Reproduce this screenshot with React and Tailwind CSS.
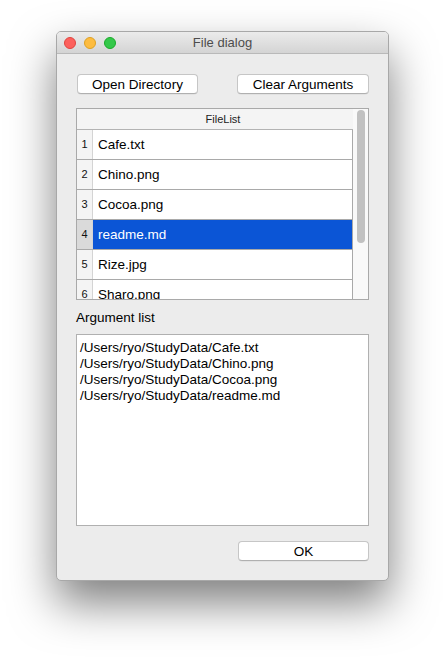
import React from "react";

const files = ["Cafe.txt", "Chino.png", "Cocoa.png", "readme.md", "Rize.jpg", "Sharo.png"];
const args = [
  "/Users/ryo/StudyData/Cafe.txt",
  "/Users/ryo/StudyData/Chino.png",
  "/Users/ryo/StudyData/Cocoa.png",
  "/Users/ryo/StudyData/readme.md",
];

function MacButton({ children, className }) {
  return (
    <div
      className={
        "h-[20px] pt-[1px] flex items-center justify-center bg-white rounded-[4px] border border-[#c6c6c6] border-b-[#b0b0b0] text-[13.5px] text-black leading-none shadow-[0_0.5px_0.5px_rgba(0,0,0,0.08)] " +
        className
      }
    >
      {children}
    </div>
  );
}

export default function App() {
  return (
    <div
      className="w-[445px] h-[660px] bg-white pt-[31px] pl-[56px] overflow-hidden"
      style={{ fontFamily: '"Liberation Sans", Arial, sans-serif' }}
    >
      <div className="w-[333px] h-[550px] bg-[#ececec] rounded-[5px] border border-[#a8a8a8] shadow-[0_22px_45px_rgba(0,0,0,0.5)] flex flex-col overflow-hidden">
        {/* Title bar */}
        <div className="h-[22px] shrink-0 bg-gradient-to-b from-[#ebebeb] to-[#d4d4d4] border-b border-[#b9b9b9] flex items-center relative">
          <div className="flex items-center gap-[8px] pl-[7px]">
            <div className="w-[12px] h-[12px] rounded-full bg-[#fc605c] border border-[#e0443e]" />
            <div className="w-[12px] h-[12px] rounded-full bg-[#fdbc40] border border-[#dea123]" />
            <div className="w-[12px] h-[12px] rounded-full bg-[#34c84a] border border-[#1aab29]" />
          </div>
          <div className="absolute inset-0 flex items-center justify-center text-[13px] text-[#4d4d4d] pointer-events-none">
            File dialog
          </div>
        </div>

        {/* Content */}
        <div className="px-[19px] pt-[20px] flex flex-col">
          <div className="flex justify-between">
            <MacButton className="ml-[1px] w-[121px]">Open Directory</MacButton>
            <MacButton className="w-[132px]">Clear Arguments</MacButton>
          </div>

          {/* Table */}
          <div className="mt-[14px] h-[192px] w-[293px] border border-[#a9a9a9] flex bg-white">
            <div className="flex-1 flex flex-col overflow-hidden">
              <div className="h-[21px] shrink-0 bg-[#f4f4f4] border-b border-[#b3b3b3] flex">
                <div className="w-[16px] shrink-0" />
                <div className="flex-1 flex items-center justify-center text-[11px] text-[#222]">FileList</div>
              </div>
              <div className="flex-1 overflow-hidden border-r border-[#a9a9a9]">
                {files.map((f, i) => {
                  const sel = i === 3;
                  return (
                    <div key={f} className="h-[30px] shrink-0 flex border-b border-[#a9a9a9]">
                      <div
                        className={
                          "w-[16px] shrink-0 flex items-center justify-center text-[11px] border-r border-[#d4d4d4] " +
                          (sel ? "bg-[#dadada] text-[#111]" : "bg-[#f4f4f4] text-[#111]")
                        }
                      >
                        {i + 1}
                      </div>
                      <div
                        className={
                          "flex-1 flex items-center pl-[5px] pt-[1px] text-[13.5px] " +
                          (sel ? "bg-[#0b55d6] text-white" : "bg-white text-black")
                        }
                      >
                        {f}
                      </div>
                    </div>
                  );
                })}
              </div>
            </div>
            <div className="w-[15px] shrink-0 bg-[#f9f9f9] pt-[1px] pl-[4px]">
              <div className="w-[8px] h-[133px] rounded-full bg-[#c1c1c1]" />
            </div>
          </div>

          <div className="mt-[10px] h-[16px] leading-[16px] text-[13.5px] text-black">Argument list</div>

          <div className="mt-[8px] h-[192px] w-[293px] border border-[#b0b0b0] bg-white pt-[5px] pl-[3px]">
            {args.map((a) => (
              <div key={a} className="h-[16px] leading-[16px] text-[13.5px] text-black">
                {a}
              </div>
            ))}
          </div>

          <div className="mt-[15px] flex justify-end">
            <MacButton className="w-[131px]">OK</MacButton>
          </div>
        </div>
      </div>
    </div>
  );
}
